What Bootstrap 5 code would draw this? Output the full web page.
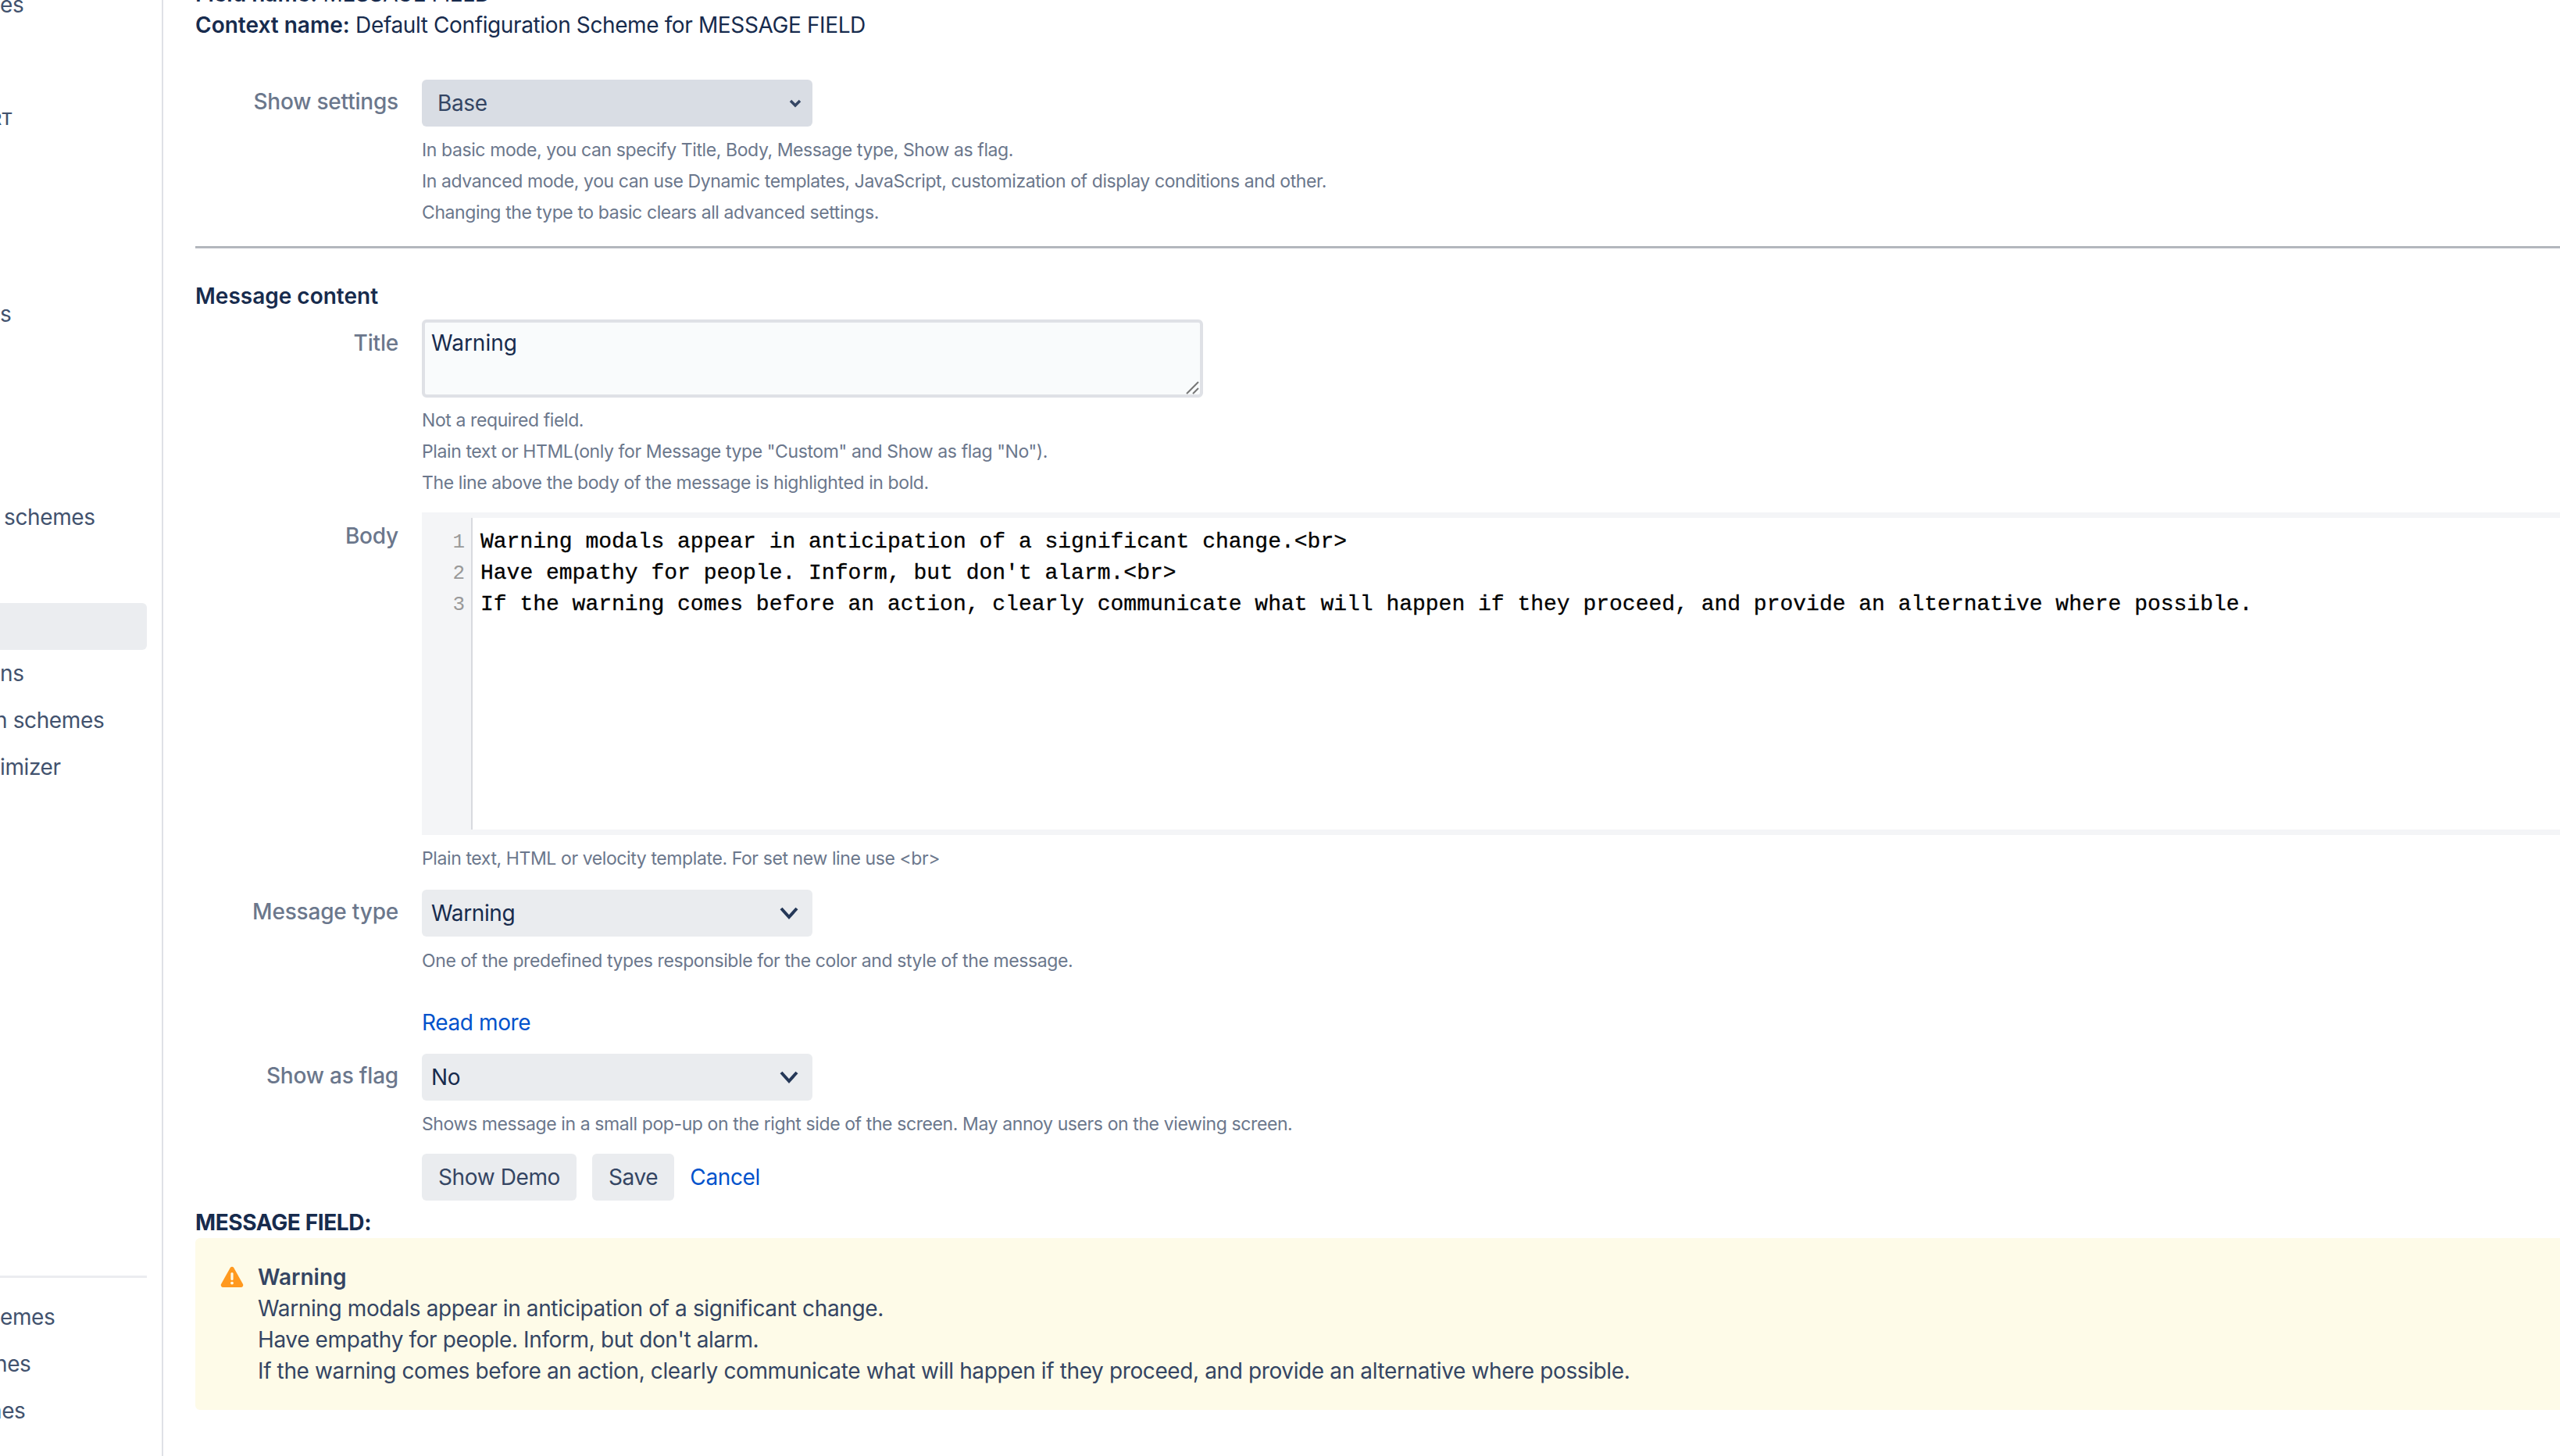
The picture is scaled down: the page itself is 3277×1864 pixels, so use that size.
<!DOCTYPE html>
<html lang="en">
<head>
  <meta charset="UTF-8" />
  <meta name="viewport" content="width=device-width, initial-scale=1" />
  <title>Message field configuration</title>
  <link href="https://cdn.jsdelivr.net/npm/bootstrap@5.3.0/dist/css/bootstrap.min.css" rel="stylesheet" />
  <style>
    html, body { height: 100%; overflow: hidden; }
    body { font-family: "Inter", "Liberation Sans", sans-serif; font-size: 28px; line-height: 40px; letter-spacing: -0.38px; color: #172b4d; background: #fff; }

    /* sidebar, cut off by the left edge of the window */
    .side-col { width: 209px; height: 1864px; flex: none; border-right: 2px solid #dfe1e6; overflow: hidden; }
    .side-item { width: 188px; height: 60px; line-height: 60px; color: #42526e; white-space: nowrap; }
    .side-first { margin-top: -24px; }
    .side-head { height: 40px; line-height: 40px; margin-top: 96px; font-size: 22px; font-weight: 500; text-indent: -12px; }
    .side-gap-200 { margin-top: 200px; }
    .side-gap-80 { margin-top: 80px; }
    .side-active { background: #ebedf0; border-radius: 0 6px 6px 0; }
    .side-rule { width: 188px; height: 3px; margin-top: 621px; margin-bottom: 20px; background: #ebecf0; }
    .cut-7 { text-indent: -7px; }
    .cut-14 { text-indent: -14px; }
    .pad-left { padding-left: 5px; }

    /* main form */
    .main-col { margin-top: -28px; padding-left: 41px; min-width: 0; }
    .field-label { width: 290px; flex: none; padding-right: 30px; text-align: right; color: #6b778c; font-weight: 500; letter-spacing: -0.2px; }
    .field-body { min-width: 0; flex: 1; }
    .hint { font-size: 23px; letter-spacing: -0.4px; color: #6b778c; }
    .sect-rule { height: 3px; margin: 23px 0 41px; background: #b3b7bd; }
    .b-600 { font-weight: 600; letter-spacing: 0; }

    .jira-select { width: 500px; height: 60px; padding: 0 60px 0 12px; border: 0; border-radius: 6px; font-size: 28px; letter-spacing: -0.38px; line-height: 60px; color: #172b4d; background-color: #eaecef; background-size: 28px 28px; background-position: right 16px center; background-image: url("data:image/svg+xml,%3Csvg xmlns='http://www.w3.org/2000/svg' viewBox='0 0 28 28'%3E%3Cpath d='M4 8l10 11L24 8' fill='none' stroke='%23253858' stroke-width='4'/%3E%3C/svg%3E"); }
    .jira-select.mode-select { padding: 0 60px 3px 20px; color: #344563; background-color: #d9dde4; background-size: 16px 16px; background-position: right 14px center; background-image: url("data:image/svg+xml,%3Csvg xmlns='http://www.w3.org/2000/svg' viewBox='0 0 16 16'%3E%3Cpath d='M2 5l6 6 6-6' fill='none' stroke='%23344563' stroke-width='3.5'/%3E%3C/svg%3E"); }
    .title-wrap { width: 1000px; }
    .title-area { width: 1000px; height: 100px; padding: 6px 8px; border: 4px solid #dfe1e6; border-radius: 6px; font-size: 28px; line-height: 40px; color: #172b4d; background-color: #f9fbfc; resize: none; }
    .title-grip { right: 5px; bottom: 4px; width: 17px; height: 17px; }

    .code-box { height: 413px; border: solid #f4f5f7; border-width: 7px 0 7px 0; background: #fff; }
    .code-gutter { width: 65px; flex: none; padding: 11px 8px 0 0; background: #f4f5f7; border-right: 2px solid #d8dadf; text-align: right; font-family: "Liberation Mono", monospace; font-size: 26px; letter-spacing: 0; line-height: 40px; color: #999; }
    .code-lines { margin: 0; padding: 11px 0 0 10px; overflow: hidden; font-family: "Liberation Mono", monospace; font-size: 28px; letter-spacing: 0; line-height: 40px; color: #000; -webkit-text-stroke: 0.3px #000; }

    .jira-btn { height: 60px; padding: 0 21px; border: 0; border-radius: 6px; font-size: 28px; letter-spacing: -0.38px; line-height: 60px; color: #344563; background: #eaecef; }
    .jira-link { color: #0052cc; text-decoration: none; }
    .btn-row { gap: 20px; margin-top: 18px; }

    .warn-box { height: 220px; padding: 30px 32px; background: #fefbe8; border-radius: 6px 0 0 6px; color: #344563; }
    .warn-icon { width: 30px; height: 28px; margin: 6px 18px 0 0; flex: none; }
  </style>
</head>
<body>
  <div class="d-flex">
    <nav class="side-col">
      <div class="side-item side-first">es</div>
      <div class="side-item side-head">RT</div>
      <div class="side-item side-gap-200">s</div>
      <div class="side-item side-gap-200 pad-left">schemes</div>
      <div class="side-item side-gap-80 side-active"></div>
      <div class="side-item">ns</div>
      <div class="side-item cut-7">n schemes</div>
      <div class="side-item">imizer</div>
      <div class="side-rule"></div>
      <div class="side-item">emes</div>
      <div class="side-item cut-7">nes</div>
      <div class="side-item cut-14">nes</div>
    </nav>

    <main class="main-col flex-grow-1">
      <div><span class="b-600">Field name:</span> MESSAGE FIELD</div>
      <div><span class="b-600">Context name:</span> Default Configuration Scheme for MESSAGE FIELD</div>

      <div class="d-flex" style="margin-top: 50px">
        <label class="field-label" style="line-height: 56px">Show settings</label>
        <div class="field-body">
          <select class="form-select jira-select mode-select"><option>Base</option></select>
          <div class="hint" style="margin-top: 10px">In basic mode, you can specify Title, Body, Message type, Show as flag.</div>
          <div class="hint">In advanced mode, you can use Dynamic templates, JavaScript, customization of display conditions and other.</div>
          <div class="hint">Changing the type to basic clears all advanced settings.</div>
        </div>
      </div>

      <div class="sect-rule"></div>
      <div class="b-600">Message content</div>

      <div class="d-flex" style="margin-top: 10px">
        <label class="field-label" style="line-height: 60px">Title</label>
        <div class="field-body">
          <div class="title-wrap position-relative d-flex">
            <textarea class="form-control title-area">Warning</textarea>
            <svg class="title-grip position-absolute" viewBox="0 0 17 17">
              <path d="M1 16L16 1M9 16l7-7" fill="none" stroke="#777" stroke-width="2"/>
            </svg>
          </div>
          <div class="hint" style="margin-top: 9px">Not a required field.</div>
          <div class="hint">Plain text or HTML(only for Message type "Custom" and Show as flag "No").</div>
          <div class="hint">The line above the body of the message is highlighted in bold.</div>
        </div>
      </div>

      <div class="d-flex" style="margin-top: 18px">
        <label class="field-label" style="line-height: 60px">Body</label>
        <div class="field-body">
          <div class="code-box d-flex">
            <div class="code-gutter">1<br>2<br>3</div>
            <pre class="code-lines flex-grow-1">Warning modals appear in anticipation of a significant change.&lt;br&gt;
Have empathy for people. Inform, but don't alarm.&lt;br&gt;
If the warning comes before an action, clearly communicate what will happen if they proceed, and provide an alternative where possible.</pre>
          </div>
          <div class="hint" style="margin-top: 10px">Plain text, HTML or velocity template. For set new line use &lt;br&gt;</div>
        </div>
      </div>

      <div class="d-flex" style="margin-top: 20px">
        <label class="field-label" style="line-height: 56px">Message type</label>
        <div class="field-body">
          <select class="form-select jira-select"><option>Warning</option></select>
          <div class="hint" style="margin-top: 11px">One of the predefined types responsible for the color and style of the message.</div>
          <div style="margin-top: 39px"><a class="jira-link" href="#">Read more</a></div>
        </div>
      </div>

      <div class="d-flex" style="margin-top: 20px">
        <label class="field-label" style="line-height: 56px">Show as flag</label>
        <div class="field-body">
          <select class="form-select jira-select"><option>No</option></select>
          <div class="hint" style="margin-top: 10px">Shows message in a small pop-up on the right side of the screen. May annoy users on the viewing screen.</div>
          <div class="d-flex align-items-center btn-row">
            <button type="button" class="btn jira-btn">Show Demo</button>
            <button type="button" class="btn jira-btn">Save</button>
            <a class="jira-link" href="#">Cancel</a>
          </div>
        </div>
      </div>

      <div class="fw-bold" style="margin-top: 8px">MESSAGE FIELD:</div>
      <div class="warn-box d-flex">
        <svg class="warn-icon" viewBox="0 0 30 28">
          <path d="M12.6 2.2a2.8 2.8 0 0 1 4.8 0l11.6 20.9A2.8 2.8 0 0 1 26.6 27H3.4A2.8 2.8 0 0 1 1 23.1z" fill="#ff991f"/>
          <rect x="13.4" y="8" width="3.2" height="10" rx="1.6" fill="#fefbe8"/>
          <circle cx="15" cy="21.6" r="1.9" fill="#fefbe8"/>
        </svg>
        <div>
          <div class="b-600">Warning</div>
          <div>Warning modals appear in anticipation of a significant change.</div>
          <div>Have empathy for people. Inform, but don't alarm.</div>
          <div>If the warning comes before an action, clearly communicate what will happen if they proceed, and provide an alternative where possible.</div>
        </div>
      </div>
    </main>
  </div>
  <script src="https://cdn.jsdelivr.net/npm/bootstrap@5.3.0/dist/js/bootstrap.bundle.min.js"></script>
</body>
</html>
